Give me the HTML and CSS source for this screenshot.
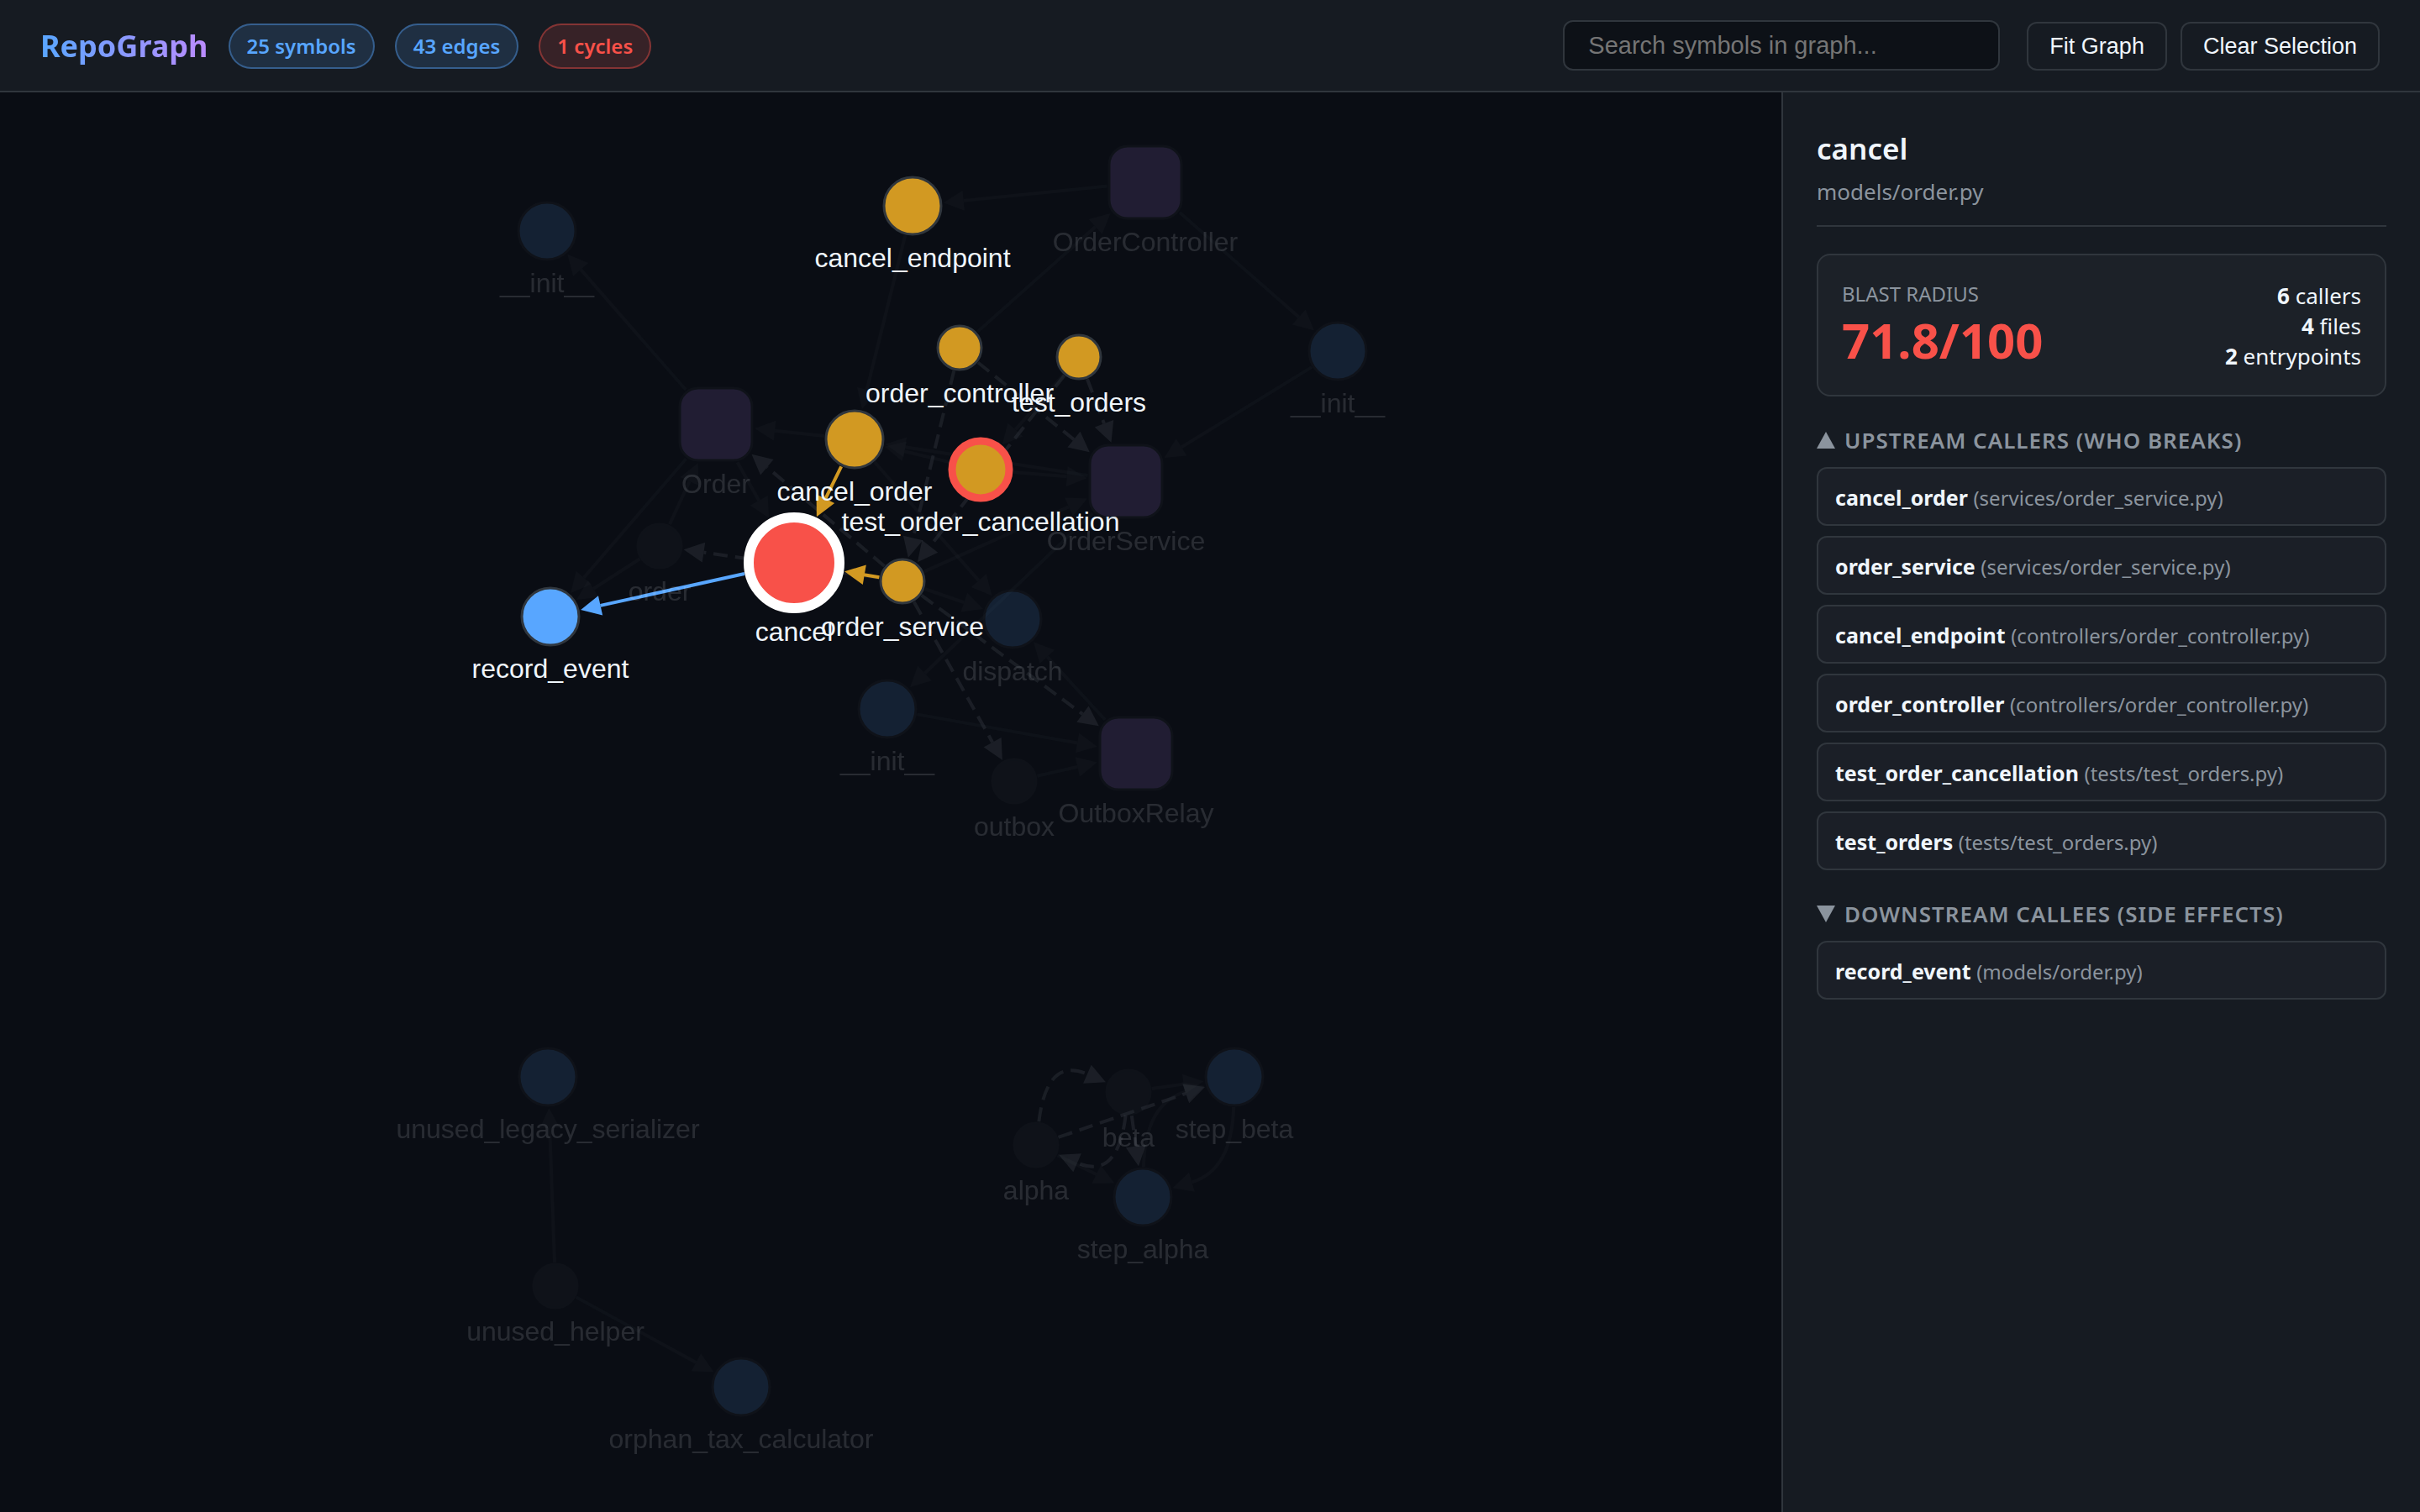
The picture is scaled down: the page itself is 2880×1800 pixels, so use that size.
FILE: index.html
```
<!DOCTYPE html>
<html lang="en">
<head>
    <meta charset="UTF-8">
    <meta name="viewport" content="width=device-width, initial-scale=1.0">
    <title>RepoGraph</title>
    <link rel="stylesheet" href="styles.css">
</head>
<body>
    <header>
        <div class="header-left">
            <h1 class="logo">RepoGraph</h1>
            <span class="badge">25 symbols</span>
            <span class="badge">43 edges</span>
            <span class="badge badge-red">1 cycles</span>
        </div>
        <div class="header-right">
            <input type="text" class="search" id="search" placeholder="Search symbols in graph..." aria-label="Search symbols in graph">
            <div class="actions">
                <button type="button" class="btn">Fit Graph</button>
                <button type="button" class="btn">Clear Selection</button>
            </div>
        </div>
    </header>

    <div class="layout">
        <main class="graph">
            <svg id="cy" viewBox="0 0 2120 1690" role="img" aria-label="Dependency graph"></svg>
        </main>

        <aside class="sidebar">
            <div class="symbol">
                <h2 class="symbol-name">cancel</h2>
                <div class="symbol-file">models/order.py</div>
            </div>

            <div class="blast">
                <div>
                    <div class="blast-label">BLAST RADIUS</div>
                    <div class="blast-score">71.8/100</div>
                </div>
                <div class="blast-stats">
                    <div><b>6</b> callers</div>
                    <div><b>4</b> files</div>
                    <div><b>2</b> entrypoints</div>
                </div>
            </div>

            <h3 class="section-title"><svg class="tri" viewBox="0 0 22 20" aria-hidden="true"><path d="M11 0L22 20H0Z"/></svg>UPSTREAM CALLERS (WHO BREAKS)</h3>
            <ul class="list">
                <li><strong>cancel_order</strong> <span>(services/order_service.py)</span></li>
                <li><strong>order_service</strong> <span>(services/order_service.py)</span></li>
                <li><strong>cancel_endpoint</strong> <span>(controllers/order_controller.py)</span></li>
                <li><strong>order_controller</strong> <span>(controllers/order_controller.py)</span></li>
                <li><strong>test_order_cancellation</strong> <span>(tests/test_orders.py)</span></li>
                <li><strong>test_orders</strong> <span>(tests/test_orders.py)</span></li>
            </ul>

            <h3 class="section-title"><svg class="tri" viewBox="0 0 22 20" aria-hidden="true"><path d="M0 0H22L11 20Z"/></svg>DOWNSTREAM CALLEES (SIDE EFFECTS)</h3>
            <ul class="list">
                <li><strong>record_event</strong> <span>(models/order.py)</span></li>
            </ul>
        </aside>
    </div>

    <script src="graph.js"></script>
</body>
</html>
```

FILE: styles.css
```
* {
    box-sizing: border-box;
}
body {
    margin: 0;
    height: 100vh;
    display: flex;
    flex-direction: column;
    overflow: hidden;
    background: #0a0d14;
    color: #f0f6fc;
    font-family: "Segoe UI", "Noto Sans", sans-serif;
    font-size: 26px;
}
header {
    display: flex;
    justify-content: space-between;
    align-items: center;
    padding: 24px 48px;
    background: #161b22;
    border-bottom: 2px solid #30363d;
}
.header-left {
    display: flex;
    align-items: center;
    gap: 24px;
    padding-top: 2px;
}
.logo {
    margin: 0;
    font-size: 36px;
    line-height: 54px;
    font-weight: 700;
    background: linear-gradient(90deg, #58a6ff, #bc8cff);
    -webkit-background-clip: text;
    background-clip: text;
    color: transparent;
}
.badge {
    padding: 0 20px;
    border: 2px solid rgba(88, 166, 255, 0.4);
    border-radius: 27px;
    background: rgba(88, 166, 255, 0.15);
    color: #58a6ff;
    font-size: 24px;
    line-height: 50px;
    font-weight: 600;
}
.badge-red {
    border-color: rgba(248, 81, 73, 0.4);
    background: rgba(248, 81, 73, 0.15);
    color: #f85149;
}
.header-right {
    display: flex;
    align-items: flex-end;
    gap: 32px;
}
.search {
    width: 520px;
    height: 60px;
    padding: 0 28px;
    border: 2px solid #30363d;
    border-radius: 12px;
    background: #0d1117;
    color: #f0f6fc;
    font-family: "Liberation Sans", Arial, sans-serif;
    font-size: 29px;
}
.search::placeholder {
    color: #757575;
}
.actions {
    display: flex;
    gap: 16px;
}
.btn {
    height: 58px;
    padding: 0 25px;
    border: 2px solid #30363d;
    border-radius: 12px;
    background: #161b22;
    color: #f0f6fc;
    font-family: "Liberation Sans", Arial, sans-serif;
    font-size: 27px;
    cursor: pointer;
}
.btn:hover {
    background: #21262d;
}

.layout {
    flex: 1;
    min-height: 0;
    display: flex;
}
.graph {
    flex: 1;
    min-width: 0;
}
.graph svg {
    display: block;
    width: 100%;
    height: 100%;
}
.sidebar {
    width: 760px;
    padding: 40px;
    border-left: 2px solid #30363d;
    background: #161b22;
    overflow-y: auto;
}

/* selected symbol */
.symbol {
    padding-bottom: 22px;
    margin-bottom: 32px;
    border-bottom: 2px solid #30363d;
}
.symbol-name {
    margin: 0;
    font-size: 35px;
    line-height: 54px;
    font-weight: 600;
}
.symbol-file {
    margin-top: 6px;
    color: #8b949e;
    font-size: 26px;
    line-height: 36px;
}
.blast {
    display: flex;
    justify-content: space-between;
    align-items: flex-end;
    padding: 28px;
    border: 2px solid #30363d;
    border-radius: 16px;
    background: #1c2128;
}
.blast-label {
    color: #8b949e;
    font-size: 24px;
    line-height: 36px;
}
.blast-score {
    color: #f85149;
    font-size: 58px;
    line-height: 74px;
    font-weight: 700;
}
.blast-stats {
    text-align: right;
    font-size: 26px;
    line-height: 36px;
}
.section-title {
    margin: 34px 0 14px;
    color: #8b949e;
    font-size: 26px;
    line-height: 36px;
    font-weight: 600;
    letter-spacing: 1px;
}
.tri {
    width: 22px;
    height: 20px;
    margin-right: 11px;
    fill: #8b949e;
}
.list {
    display: flex;
    flex-direction: column;
    gap: 12px;
    margin: 0;
    padding: 0;
    list-style: none;
}
.list li {
    padding: 16px 20px 14px;
    border: 2px solid #30363d;
    border-radius: 12px;
    background: #1b1f27;
    font-size: 25px;
    line-height: 36px;
}
.list span {
    color: #8b949e;
    font-size: 24px;
    line-height: 1;
}

/* graph */
.node-shape {
    stroke: #30363d;
    stroke-width: 3;
}
.function .node-shape { fill: #58a6ff; }
.class .node-shape { fill: #bc8cff; }
.module .node-shape { fill: #30363d; }
.upstream .node-shape { fill: #d29922; }
.entry .node-shape {
    stroke: #f85149;
    stroke-width: 9;
}
.selected .node-shape {
    fill: #f85149;
    stroke: #fff;
    stroke-width: 12;
}
.node text {
    fill: #f0f6fc;
    font-family: "Liberation Sans", Arial, sans-serif;
    font-size: 32px;
    text-anchor: middle;
}
.edge {
    color: #30363d;
}
.edge path {
    fill: none;
    stroke: currentColor;
    stroke-width: 4;
}
.edge polygon {
    fill: currentColor;
}
.edge.import {
    color: #8b949e;
}
.edge.import path {
    stroke-dasharray: 17 9;
}
.edge.caller {
    color: #d29922;
}
.edge.callee {
    color: #58a6ff;
}
.faded {
    opacity: 0.13;
}
```

FILE: graph.js
```
const NS = 'http://www.w3.org/2000/svg';

// id: [x, y, radius, classes, label]
const nodes = {
    init1: [651, 165, 34, 'function faded', '__init__'],
    endpoint: [1086, 135, 34, 'upstream', 'cancel_endpoint'],
    OrderController: [1363, 107, 43, 'class faded', 'OrderController'],
    init2: [1592, 308, 34, 'function faded', '__init__'],
    order_controller: [1142, 304, 26, 'upstream', 'order_controller'],
    test_orders: [1284, 315, 26, 'upstream', 'test_orders'],
    Order: [852, 395, 43, 'class faded', 'Order'],
    cancel_order: [1017, 413, 34, 'upstream', 'cancel_order'],
    test_cancel: [1167, 449, 34, 'upstream entry', 'test_order_cancellation'],
    OrderService: [1340, 463, 43, 'class faded', 'OrderService'],
    order: [785, 540, 26, 'module faded', 'order'],
    cancel: [945, 560, 54, 'selected', 'cancel'],
    record_event: [655, 624, 34, 'function', 'record_event'],
    order_service: [1074, 582, 26, 'upstream', 'order_service'],
    dispatch: [1205, 627, 34, 'function faded', 'dispatch'],
    init3: [1056, 734, 34, 'function faded', '__init__'],
    outbox: [1207, 820, 26, 'module faded', 'outbox'],
    OutboxRelay: [1352, 787, 43, 'class faded', 'OutboxRelay'],
    legacy: [652, 1172, 34, 'function faded', 'unused_legacy_serializer'],
    helper: [661, 1421, 26, 'module faded', 'unused_helper'],
    orphan: [882, 1541, 34, 'function faded', 'orphan_tax_calculator'],
    alpha: [1233, 1253, 26, 'module faded', 'alpha'],
    beta: [1343, 1190, 26, 'module faded', 'beta'],
    step_alpha: [1360, 1315, 34, 'function faded', 'step_alpha'],
    step_beta: [1469, 1172, 34, 'function faded', 'step_beta']
};

// [source, target, classes, bend]
const edges = [
    ['Order', 'init1', 'faded'],
    ['Order', 'cancel', 'faded'],
    ['Order', 'record_event', 'faded'],
    ['order', 'Order', 'faded'],
    ['order', 'record_event', 'faded'],
    ['OrderController', 'endpoint', 'faded'],
    ['OrderController', 'init2', 'faded'],
    ['order_controller', 'OrderController', 'faded'],
    ['order_controller', 'OrderService', 'import faded'],
    ['order_controller', 'order_service', 'import faded'],
    ['init2', 'OrderService', 'faded'],
    ['endpoint', 'cancel_order', 'faded'],
    ['test_orders', 'OrderService', 'import faded'],
    ['test_orders', 'order_service', 'import faded'],
    ['test_orders', 'test_cancel', 'faded'],
    ['cancel_order', 'Order', 'faded'],
    ['cancel_order', 'dispatch', 'faded'],
    ['OrderService', 'cancel_order', 'faded'],
    ['OrderService', 'init3', 'faded'],
    ['test_cancel', 'cancel_order', 'faded'],
    ['test_cancel', 'OrderService', 'faded'],
    ['order_service', 'order', 'import faded'],
    ['order_service', 'Order', 'import faded'],
    ['order_service', 'OrderService', 'faded'],
    ['order_service', 'dispatch', 'faded'],
    ['order_service', 'outbox', 'import faded'],
    ['order_service', 'OutboxRelay', 'import faded'],
    ['init3', 'OutboxRelay', 'faded'],
    ['outbox', 'OutboxRelay', 'faded'],
    ['OutboxRelay', 'dispatch', 'faded'],
    ['helper', 'legacy', 'faded'],
    ['helper', 'orphan', 'faded'],
    ['alpha', 'step_alpha', 'faded'],
    ['alpha', 'beta', 'import faded', 85],
    ['beta', 'alpha', 'import faded', 85],
    ['beta', 'step_beta', 'faded'],
    ['beta', 'step_alpha', 'import faded'],
    ['alpha', 'step_beta', 'import faded'],
    ['step_alpha', 'step_beta', 'faded', 65],
    ['step_beta', 'step_alpha', 'faded', 65],
    ['cancel_order', 'cancel', 'caller'],
    ['order_service', 'cancel', 'caller'],
    ['cancel', 'record_event', 'callee']
];

function el(name, attrs, parent) {
    const node = document.createElementNS(NS, name);
    for (const key in attrs) node.setAttribute(key, attrs[key]);
    parent.appendChild(node);
    return node;
}

// true while the offset (dx, dy) is still inside the node outline
function inside(node, dx, dy) {
    const cls = node[3];
    const border = cls.includes('selected') ? 6 : cls.includes('entry') ? 4 : 2;
    const r = node[2] + border;
    if (!cls.includes('class')) return Math.hypot(dx, dy) < r;
    const corner = 22;
    const qx = Math.max(Math.abs(dx) - r + corner, 0);
    const qy = Math.max(Math.abs(dy) - r + corner, 0);
    return Math.hypot(qx, qy) < corner;
}

// point on the outline of the node in the direction of (tx, ty)
function outline(node, tx, ty, gap) {
    const len = Math.hypot(tx - node[0], ty - node[1]);
    const ux = (tx - node[0]) / len;
    const uy = (ty - node[1]) / len;
    let d = 0;
    while (inside(node, ux * d, uy * d)) d += 0.5;
    d += gap;
    return [node[0] + ux * d, node[1] + uy * d];
}

function drawEdge(svg, [source, target, cls, bend = 0]) {
    const s = nodes[source];
    const t = nodes[target];
    const len = Math.hypot(t[0] - s[0], t[1] - s[1]);
    const cx = (s[0] + t[0]) / 2 + (t[1] - s[1]) / len * bend;
    const cy = (s[1] + t[1]) / 2 - (t[0] - s[0]) / len * bend;
    const start = outline(s, cx, cy, 0);
    const tip = outline(t, cx, cy, 1);

    const al = Math.hypot(tip[0] - cx, tip[1] - cy);
    const ux = (tip[0] - cx) / al;
    const uy = (tip[1] - cy) / al;
    const bx = tip[0] - ux * 24;
    const by = tip[1] - uy * 24;

    const g = el('g', { class: 'edge ' + cls }, svg);
    el('path', { d: `M${start} Q${cx},${cy} ${bx},${by}` }, g);
    el('polygon', {
        points: `${tip} ${bx - uy * 12},${by + ux * 12} ${bx + uy * 12},${by - ux * 12}`
    }, g);
}

function drawNode(svg, [x, y, r, cls, label]) {
    const g = el('g', { class: 'node ' + cls }, svg);
    if (cls.includes('class')) {
        el('rect', { class: 'node-shape', x: x - r, y: y - r, width: r * 2, height: r * 2, rx: 22 }, g);
    } else {
        el('circle', { class: 'node-shape', cx: x, cy: y, r: r }, g);
    }
    el('text', { x: x, y: y + r + 39 }, g).textContent = label;
}

const svg = document.getElementById('cy');
edges.forEach(edge => drawEdge(svg, edge));
Object.values(nodes).forEach(node => drawNode(svg, node));
```
